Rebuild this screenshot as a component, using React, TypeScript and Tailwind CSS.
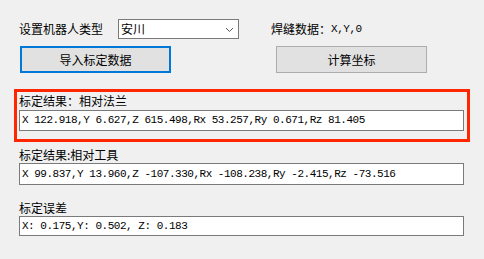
import React from "react";

const cjk = "font-['Noto_Sans_CJK_SC','Noto_Sans',sans-serif]";
const mono = "font-['Liberation_Mono','Noto_Sans_CJK_SC',monospace]";

function TextBox({ text, h }: { text: string; h: string }) {
  return (
    <div
      className={`ml-[19px] w-[445px] ${h} bg-white border border-[#7a7a7a] flex items-center pl-[2px] ${mono} text-[11px] tracking-[-0.48px] text-black whitespace-pre`}
    >
      {text}
    </div>
  );
}

export default function App() {
  return (
    <div className={`w-[484px] h-[259px] bg-[#f0f0f0] overflow-hidden flex flex-col ${cjk} text-[12px] text-black`}>
      {/* row 1 */}
      <div className="mt-[19px] flex items-center h-[20px]">
        <div className="ml-[19px] w-[99px] leading-[20px]">设置机器人类型</div>
        <div className="w-[121px] h-[20px] bg-white border border-[#7a7a7a] flex items-center justify-between pl-[2px] pr-[4px]">
          <span className="leading-[18px]">安川</span>
          <svg width="9" height="6" viewBox="0 0 9 6" className="mt-[2px]">
            <path d="M1 1 L4.5 4.5 L8 1" fill="none" stroke="#5a5a5a" strokeWidth="1" />
          </svg>
        </div>
        <div className="ml-[32px] leading-[20px] flex items-center">
          <span>焊缝数据：</span>
          <span className={`${mono} text-[11px] tracking-[-0.48px]`}>X,Y,0</span>
        </div>
      </div>
      {/* row 2 */}
      <div className="mt-[7px] flex h-[27px]">
        <div className="ml-[20px] w-[151px] h-[27px] bg-[#e1e1e1] border-2 border-[#0078d7] flex items-center justify-center">
          导入标定数据
        </div>
        <div className="ml-[105px] w-[151px] h-[27px] bg-[#e1e1e1] border border-[#adadad] flex items-center justify-center">
          计算坐标
        </div>
      </div>
      {/* red box */}
      <div className="mt-[16px] ml-[14px] w-[456px] h-[53px] border-[3px] border-[#ff2600] flex flex-col">
        <div className="pl-[2px] h-[18px] leading-[18px]">标定结果：相对法兰</div>
        <div className="-ml-[17px]">
          <TextBox h="h-[21px]" text="X 122.918,Y 6.627,Z 615.498,Rx 53.257,Ry 0.671,Rz 81.405" />
        </div>
      </div>
      <div className="mt-[5px] ml-[19px] h-[16px] leading-[16px]">标定结果:相对工具</div>
      <TextBox h="h-[22px]" text="X 99.837,Y 13.960,Z -107.330,Rx -108.238,Ry -2.415,Rz -73.516" />
      <div className="mt-[14px] ml-[19px] h-[17px] leading-[17px]">标定误差</div>
      <TextBox h="h-[20px]" text="X: 0.175,Y: 0.502, Z: 0.183" />
    </div>
  );
}
